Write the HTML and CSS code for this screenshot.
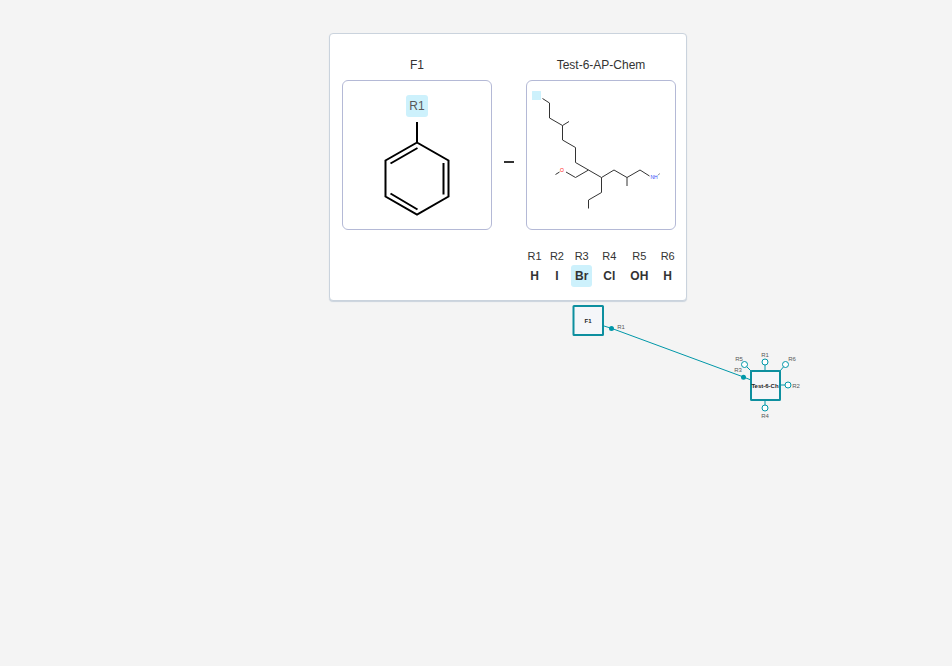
FILE: index.html
```html
<!DOCTYPE html>
<html lang="en">
<head>
<meta charset="utf-8">
<title>Macromolecule canvas</title>
<link rel="stylesheet" href="styles.css">
</head>
<body>
<main class="canvas">
  <svg class="scene" role="img" aria-label="F1 connected to Test-6-Ch">
    <g class="bond">
      <path d="M604 326L612 328.500L743.500 377L751 380"/>
      <path d="M765 362V371M744.500 364.500L751 371M785.500 364.500L780 371M780 385H788M765 400V408"/>
    </g>
    <g class="monomer">
      <rect x="573.500" y="306" width="29.500" height="29" rx="0.500"/>
      <rect x="751" y="371" width="29" height="29" rx="0.500"/>
    </g>
    <g class="used">
      <circle cx="611.500" cy="328.500" r="2.500"/>
      <circle cx="743.500" cy="377.200" r="2.500"/>
    </g>
    <g class="free">
      <circle cx="765" cy="362" r="3"/>
      <circle cx="744.500" cy="364.500" r="3"/>
      <circle cx="785.500" cy="364.500" r="3"/>
      <circle cx="788" cy="385" r="3"/>
      <circle cx="765" cy="408" r="3"/>
    </g>
    <g class="monomer-name">
      <text x="588" y="323">F1</text>
      <text x="765" y="388">Test-6-Ch</text>
    </g>
    <g class="point-name">
      <text x="621" y="329">R1</text>
      <text x="765" y="357">R1</text>
      <text x="739" y="361">R5</text>
      <text x="792" y="361">R6</text>
      <text x="738" y="372">R3</text>
      <text x="796" y="388">R2</text>
      <text x="765" y="418">R4</text>
    </g>
  </svg>

  <section class="preview">
    <figure class="molecule">
      <figcaption>F1</figcaption>
      <svg class="structure" viewBox="0 0 148 148">
        <rect class="mark" x="63" y="14" width="22" height="22" rx="3"/>
        <text class="mark-name" x="74" y="29">R1</text>
        <g class="ring">
          <path d="M74 41V61.500L105.500 79.500V115.500L74 133.500L42.500 115.500V79.500L74 61.500"/>
          <path d="M74.500 67L47.500 82.500M100.500 82V113.500M47.500 112.500L74.500 128.500"/>
        </g>
      </svg>
    </figure>
    <span class="dash"></span>
    <figure class="molecule">
      <figcaption>Test-6-AP-Chem</figcaption>
      <svg class="structure" viewBox="0 0 148 148">
        <rect class="mark" x="5" y="10" width="9" height="9" rx="0.500"/>
        <g class="chain">
          <path d="M15.500 17.500L22.500 22V37L35.500 44.500L42 40.500M35.500 44.500V59L48.500 66.500V81.500L61.500 89L74.500 96.500L87 89L100 96.500L113 89L122.500 95"/>
          <path d="M100 96.500V105M61.500 89L48.500 96.500L39 91M32.500 91L28.500 93.500M74.500 96.500V111.500L61.500 119V127.500"/>
          <path class="faint" d="M131 94L133 92.500"/>
        </g>
        <text class="oxygen" x="35" y="91">O</text>
        <text class="nitrogen" x="127" y="98">NH</text>
      </svg>
    </figure>
    <table class="groups">
      <thead>
        <tr><th>R1</th><th>R2</th><th>R3</th><th>R4</th><th>R5</th><th>R6</th></tr>
      </thead>
      <tbody>
        <tr><td>H</td><td>I</td><td class="active">Br</td><td>Cl</td><td>OH</td><td>H</td></tr>
      </tbody>
    </table>
  </section>
</main>
</body>
</html>
```
FILE: styles.css
```css
* {
  box-sizing: border-box;
}

body {
  margin: 0;
  background: #f4f4f4;
  color: #333333;
  font: 12px/16px "Liberation Sans", Arial, sans-serif;
}

.canvas {
  position: relative;
  height: 100vh;
  overflow: hidden;
}

.scene {
  display: block;
  width: 100%;
  height: 100%;
}

.bond {
  fill: none;
  stroke: #0097a8;
}

.monomer {
  fill: #f5f6f9;
  stroke: #0d8f9f;
  stroke-width: 2;
}

.used {
  fill: #0097a8;
}

.free {
  fill: #ffffff;
  stroke: #0097a8;
}

.monomer-name {
  fill: #222222;
  font-size: 6px;
  font-weight: bold;
  text-anchor: middle;
}

.point-name {
  fill: #585858;
  font-size: 6px;
  text-anchor: middle;
}

.preview {
  position: absolute;
  top: 33px;
  left: 329px;
  display: grid;
  grid-template-columns: 150px 34px 150px;
  padding: 23px 10px 13px 12px;
  background: #ffffff;
  border: 1px solid #cad3dd;
  border-radius: 4px;
  box-shadow: 0 1px 1px #cad3dd;
}

.molecule {
  margin: 0;
}

.molecule figcaption {
  margin-bottom: 7px;
  text-align: center;
}

.structure {
  display: block;
  width: 100%;
  border: 1px solid #b4b9d6;
  border-radius: 6px;
}

.mark {
  fill: #cdf1fc;
}

.mark-name {
  fill: #585858;
  font-size: 12px;
  text-anchor: middle;
}

.ring {
  fill: none;
  stroke: #000000;
  stroke-width: 2;
}

.chain {
  fill: none;
  stroke: #333333;
}

.faint {
  stroke: #999999;
}

.oxygen,
.nitrogen {
  font-size: 5px;
  text-anchor: middle;
}

.oxygen {
  fill: #ff0d0d;
}

.nitrogen {
  fill: #304ff7;
}

.dash {
  align-self: center;
  justify-self: center;
  width: 10px;
  height: 2px;
  margin-top: 36px;
  background: #333333;
}

.groups {
  grid-column: 1 / -1;
  justify-self: end;
  margin-top: 18px;
  margin-right: -7px;
  border-spacing: 7px 0;
  text-align: center;
}

.groups th {
  padding: 0 0 1px;
  font-size: 11px;
  font-weight: normal;
}

.groups td {
  padding: 3px 4px;
  font-weight: bold;
  border-radius: 3px;
}

.groups .active {
  background: #cdf1fc;
}
```
